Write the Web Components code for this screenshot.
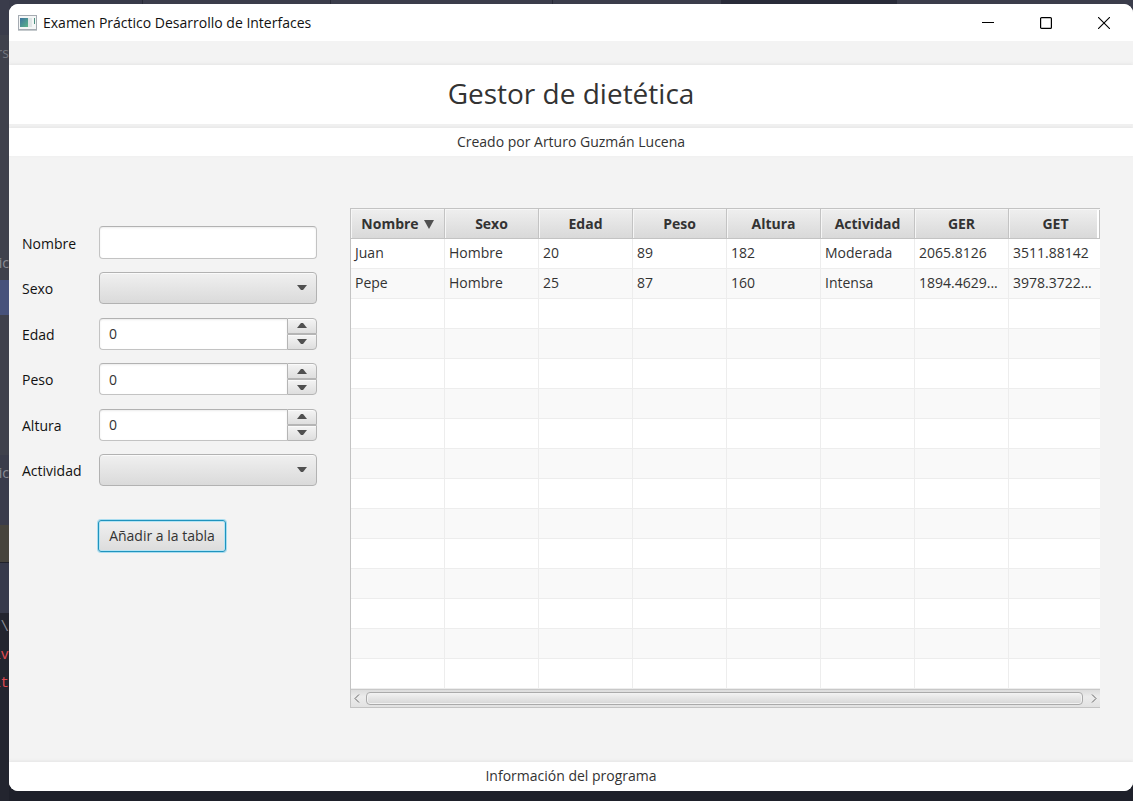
<!DOCTYPE html>
<html lang="es">
<head>
<meta charset="utf-8">
<title>Examen Práctico Desarrollo de Interfaces</title>
<style>
  body { margin: 0; font-family: "Open Sans", "Noto Sans", sans-serif; font-size: 14px; color: #333; }
</style>
</head>
<body>
<desk-top>
  <editor-edge slot="edge"></editor-edge>
  <app-window caption="Examen Práctico Desarrollo de Interfaces">
    <app-banner>
      <span slot="title">Gestor de dietética</span>
      <span slot="author">Creado por Arturo Guzmán Lucena</span>
    </app-banner>
    <diet-main>
      <diet-form slot="form"></diet-form>
      <diet-table slot="table"></diet-table>
    </diet-main>
    <app-footer>Información del programa</app-footer>
  </app-window>
</desk-top>
<script>
const define = (name, html, setup) => customElements.define(name, class extends HTMLElement {
  constructor() {
    super();
    this.attachShadow({ mode: 'open' });
  }
  connectedCallback() {
    const t = document.createElement('template');
    t.innerHTML = html;
    this.shadowRoot.replaceChildren(t.content.cloneNode(true));
    if (setup) setup(this, this.shadowRoot);
  }
});

/* Desktop behind the window */
define('desk-top', `
<style>
  :host { display: grid; grid-template-columns: 9px minmax(0, 1fr); min-height: 100vh;
    background: linear-gradient(90deg, #383a49 0 142px, #282a36 142px 143px, #3b3d4b 143px 330px, #282a36 330px 331px, #3b3d4b 331px 552px, #282a36 552px 553px, #3b3d4b 553px 721px, #292b39 721px 897px, #3b3d4b 897px) top / 100% 20px no-repeat, linear-gradient(#3b3d4b 50%, #1e202a 50%); }
  .main { display: grid; padding: 4px 0 10px; }
</style>
<slot name="edge"></slot>
<div class="main"><slot></slot></div>`);

/* Strip of the code editor that shows left of the window */
define('editor-edge', `
<style>
  :host { display: flex; flex-direction: column; overflow: hidden; background: #23252f; color: #8c8e96; font-size: 14px; }
  div { display: flex; align-items: center; justify-content: flex-end; flex: none; line-height: 20px; }
  .a { height: 35px; background: #3a3c4b; }
  .b { height: 36px; background: #3f414c; color: #74767e; }
  .c { height: 174px; background: #3f414c; }
  .d { height: 35px; background: #3f414c; }
  .e { height: 35px; background: #47527b; }
  .f { height: 140px; background: #3f414c; }
  .g { height: 35px; background: #3a3c4b; }
  .h { height: 35px; background: #3a3c4b; }
  .i { height: 37px; background: #47443d; border-bottom: 1px solid #20222b; }
  .j { height: 50px; background: #373a4b; }
  .k { height: 28px; font-family: "Liberation Mono", monospace; }
  .k:first-of-type { padding-top: 2px; }
  .red { color: #dd4a50; }
</style>
<div class="a"></div><div class="b">rs</div><div class="c"></div>
<div class="d">ic</div><div class="e"></div><div class="f"></div>
<div class="g">ic</div><div class="h"></div><div class="i"></div><div class="j"></div>
<div class="k">:\\</div><div class="k red">av</div><div class="k red">at</div>`);

/* Window frame and title bar */
define('app-window', `
<style>
  :host { display: flex; flex-direction: column; background: #f3f3f3; border-radius: 9px; overflow: hidden; }
  header { display: flex; align-items: center; height: 37px; padding-left: 9px; background: #fff; color: #111; }
  .caption { margin: 0 auto 0 6px; line-height: 20px; white-space: nowrap; }
  button { width: 58px; height: 36px; padding: 0; border: 0; background: none; display: grid; place-items: center; }
  svg { display: block; }
</style>
<header>
  <svg width="19" height="16" viewBox="0 0 19 16" aria-hidden="true">
    <defs><linearGradient id="g" x1="0" y1="0" x2="1" y2="1"><stop stop-color="#3c72a0"/><stop offset="1" stop-color="#5bb487"/></linearGradient></defs>
    <rect x=".5" y=".5" width="18" height="14" fill="#f4f6f6" stroke="#a5abb2"/>
    <rect x="2" y="3" width="8" height="9" fill="url(#g)"/><rect x="10" y="3" width="4" height="9" fill="#dfe5e6"/>
    <path d="M16.5 3v6" stroke="#4c9180"/><path d="M0 15.5h19" stroke="#c5cacd"/>
  </svg>
  <span class="caption"></span>
  <button aria-label="Minimizar"><svg width="12" height="12" stroke="#000"><path d="M0 5.5h12"/></svg></button>
  <button aria-label="Maximizar"><svg width="12" height="12" fill="none" stroke="#000"><rect x=".6" y=".6" width="10.8" height="10.8" rx="1" stroke-width="1.2"/></svg></button>
  <button aria-label="Cerrar"><svg width="12" height="12" stroke="#000" stroke-width="1.1"><path d="M0 0l12 12M12 0L0 12"/></svg></button>
</header>
<slot></slot>`, (el, root) => { root.querySelector('.caption').textContent = el.getAttribute('caption'); });

define('app-banner', `
<style>
  :host { display: block; padding-top: 24px; text-align: center; }
  h1, p { margin: 0; font-weight: 400; background: #fff; box-shadow: 0 -1px 3px #e4e4e4; }
  h1 { font-size: 28px; line-height: 57px; padding-bottom: 2px; }
  p { margin-top: 4px; line-height: 28px; }
</style>
<h1><slot name="title"></slot></h1>
<p><slot name="author"></slot></p>`);

define('app-footer', `
<style>
  :host { display: block; padding-bottom: 2px; background: #fff; line-height: 27px; text-align: center; box-shadow: 0 -1px 3px #e4e4e4; }
</style>
<slot></slot>`);

define('diet-main', `
<style>
  :host { display: flex; flex: 1; align-items: flex-start; gap: 33px; padding: 52px 33px 54px 13px; }
  .form { flex: none; padding-top: 18px; }
  .table { flex: 1; min-width: 0; }
</style>
<div class="form"><slot name="form"></slot></div>
<div class="table"><slot name="table"></slot></div>`);

define('diet-form', `
<style>
  :host { display: block; width: 295px; }
  .fields { display: flex; flex-direction: column; justify-content: space-between; height: 260px; }
  button { display: block; margin: 34px 0 0 76px; width: 128px; height: 32px; padding: 0 0 2px; font: inherit; color: #333;
    border: 1px solid #1f93bd; border-radius: 3px; background: linear-gradient(#f0f0f0, #dcdcdc);
    box-shadow: 0 0 0 1px #a9dcef, inset 0 0 0 1px #b5e4f4; white-space: nowrap; }
</style>
<div class="fields">
  <diet-field label="Nombre" kind="text"></diet-field>
  <diet-field label="Sexo" kind="select" options="Hombre,Mujer"></diet-field>
  <diet-field label="Edad" kind="number"></diet-field>
  <diet-field label="Peso" kind="number"></diet-field>
  <diet-field label="Altura" kind="number"></diet-field>
  <diet-field label="Actividad" kind="select" options="Sedentaria,Moderada,Intensa"></diet-field>
</div>
<button type="button">Añadir a la tabla</button>`);

/* Labelled control: text box, drop-down or spinner */
const controls = {
  text: `<input id="c" type="text">`,
  select: `<div class="combo"><select id="c"></select><svg width="10" height="6" fill="#505050"><path d="M0 0h10L6 5H4z"/></svg></div>`,
  number: `<div class="spin"><input id="c" type="number" value="0">
    <div class="steps"><button type="button" aria-label="Aumentar"><svg width="10" height="5" fill="#505050"><path d="M0 5h10L6 0H4z"/></svg></button>
    <button type="button" aria-label="Disminuir"><svg width="10" height="5" fill="#505050"><path d="M0 0h10L6 5H4z"/></svg></button></div></div>`
};
define('diet-field', `
<style>
  :host { display: grid; grid-template-columns: 77px 1fr; align-items: center; }
  label { color: #111; line-height: 20px; padding-top: 2px; }
  input, select { box-sizing: border-box; width: 100%; height: 32px; margin: 0; padding: 0 9px; font: inherit; color: #333;
    border: 1px solid #c3c3c3; border-top-color: #b2b2b2; border-radius: 4px; background: #fff; outline: 0;
    box-shadow: inset 0 1px 2px #ececec; appearance: none; -webkit-appearance: none; }
  input[type=text] { display: block; height: 33px; }
  input[type=number] { -moz-appearance: textfield; appearance: textfield; }
  input::-webkit-inner-spin-button { -webkit-appearance: none; margin: 0; }
  .combo { display: grid; align-items: center; justify-items: end; }
  .combo > * { grid-area: 1 / 1; }
  select { border-color: #b2b2b2; background: linear-gradient(#f0f0f0, #dadada); box-shadow: inset 0 1px #fafafa; }
  .combo svg { margin-right: 10px; pointer-events: none; }
  .spin { display: flex; }
  .spin input { flex: 1; min-width: 0; border-right: 0; border-radius: 4px 0 0 4px; }
  .steps { display: grid; grid-template-rows: 1fr 1fr; flex: 0 0 30px; height: 32px; }
  .steps button { display: grid; place-items: center; padding: 0; border: 1px solid #b5b5b5; background: linear-gradient(#f4f4f4, #dedede); box-shadow: inset 0 1px #fafafa; }
  .steps button:first-child { border-radius: 0 4px 0 0; }
  .steps button:last-child { border-radius: 0 0 4px 0; }
  svg { display: block; }
</style>
<label for="c"></label>
<div class="control"></div>`, (el, root) => {
  root.querySelector('label').textContent = el.getAttribute('label');
  root.querySelector('.control').innerHTML = controls[el.getAttribute('kind')];
  const select = root.querySelector('select');
  if (select) {
    for (const name of el.getAttribute('options').split(',')) select.add(new Option(name));
    select.selectedIndex = -1;
  }
  const [up, down] = root.querySelectorAll('button');
  const input = root.querySelector('input');
  if (up) { up.onclick = () => input.stepUp(); down.onclick = () => input.stepDown(); }
});

define('diet-table', `
<style>
  :host { display: block; border: 1px solid #c3c3c3; border-right: 0; background: #fff; }
  .view { overflow: hidden; }
  table { width: max(100%, 752px); table-layout: fixed; border-collapse: separate; border-spacing: 0; }
  th, td { box-sizing: border-box; height: 30px; padding: 0 4px; white-space: nowrap; overflow: hidden; text-overflow: ellipsis; line-height: 20px; }
  th { border-right: 1px solid #c3c3c3; border-bottom: 1px solid #c3c3c3; background: linear-gradient(#efefef, #d9d9d9); box-shadow: inset 1px 1px #f6f6f6; }
  th svg { margin-left: 5px; }
  th:last-child { background: linear-gradient(90deg, transparent 88px, #fff 88px 90px, #c3c3c3 90px), linear-gradient(#efefef, #d9d9d9); }
  td { padding-bottom: 2px; border-right: 1px solid #ededed; border-bottom: 1px solid #ededed; text-align: left; }
  tr:nth-child(even) td { background: #f9f9f9; }
</style>
<div class="view"><table><thead><tr></tr></thead><tbody></tbody></table></div>
<scroll-track></scroll-track>`, (el, root) => {
  const rows = [
    ['Juan', 'Hombre', '20', '89', '182', 'Moderada', '2065.8126', '3511.88142'],
    ['Pepe', 'Hombre', '25', '87', '160', 'Intensa', '1894.4629...', '3978.3722...']
  ];
  while (rows.length < 15) rows.push(Array(8).fill(''));
  const mark = '<svg width="10" height="9" fill="#505050" aria-hidden="true"><path d="M0 0h10L5 9z"/></svg>';
  root.querySelector('thead tr').innerHTML = ['Nombre', 'Sexo', 'Edad', 'Peso', 'Altura', 'Actividad', 'GER', 'GET']
    .map((h, i) => `<th scope="col">${h}${i ? '' : mark}</th>`).join('');
  root.querySelector('tbody').innerHTML = rows.map(r => `<tr>${r.map(c => `<td>${c}</td>`).join('')}</tr>`).join('');
});

define('scroll-track', `
<style>
  :host { display: flex; align-items: center; height: 17px; border-top: 1px solid #c8c8c8; background: linear-gradient(#dcdcdc, #ececec 40%, #e2e2e2); }
  button { display: grid; place-items: center; width: 15px; height: 16px; padding: 0 3px 0 0; border: 0; background: none; }
  button:last-child { padding: 0 0 0 4px; width: 17px; }
  .thumb { box-sizing: border-box; flex: 1; height: 13px; border: 1px solid #aaa; border-radius: 4px; background: linear-gradient(#f3f3f3, #d6d6d6); box-shadow: inset 0 0 0 1px #f2f2f2; }
</style>
<button type="button" aria-label="Desplazar a la izquierda"><svg width="6" height="9" fill="none" stroke="#666"><path d="M5 .5l-4 4 4 4"/></svg></button>
<div class="thumb"></div>
<button type="button" aria-label="Desplazar a la derecha"><svg width="6" height="9" fill="none" stroke="#666"><path d="M1 .5l4 4-4 4"/></svg></button>`);
</script>
</body>
</html>
